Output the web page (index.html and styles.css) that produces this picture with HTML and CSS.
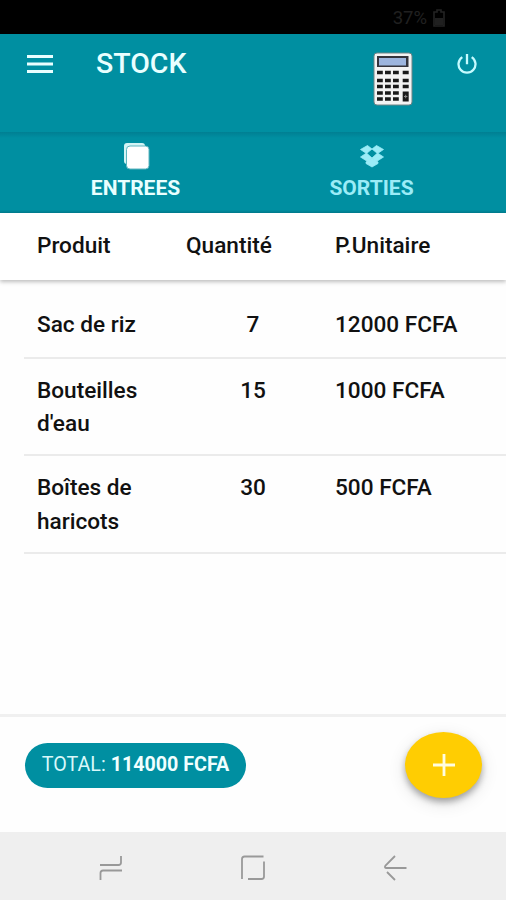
FILE: index.html
```html
<!DOCTYPE html>
<html lang="fr">
<head>
    <meta charset="UTF-8">
    <meta name="viewport" content="width=device-width, initial-scale=1.0">
    <title>Stock</title>
    <link rel="stylesheet" href="styles.css">
</head>
<body>
    <div class="app">
        <div class="status-bar">
            <span>37%</span>
            <svg width="12" height="18" viewBox="0 0 12 18">
                <path d="M4 1h4v2h3v14H1V3h3z" fill="none" stroke="#232323" stroke-width="1.6"/>
                <path d="M2 9h8v7H2z" fill="#202020"/>
            </svg>
        </div>

        <header class="toolbar">
            <svg class="menu-icon" width="26" height="18" viewBox="0 0 26 18">
                <path d="M0 1.5h26M0 9h26M0 16.5h26" stroke="#e9ffff" stroke-width="3"/>
            </svg>
            <h1>STOCK</h1>
            <svg class="calc-icon" width="40" height="54" viewBox="0 0 40 54">
                <rect x="1" y="1" width="38" height="52" rx="3" fill="#f3f3f3" stroke="#6f8385" stroke-width="1"/>
                <rect x="4" y="4" width="31.5" height="11" fill="#34343c"/>
                <rect x="6" y="6" width="27" height="7.5" fill="#9db5de"/>
                <path d="M4 20.5h22M4 28.5h22M4 34.5h22M4 41h22M4 47h22" stroke="#1a1a1a" stroke-width="3.6" stroke-dasharray="5.8 2.2"/>
                <path d="M29.7 18.7h6v3.6h-6zM29.7 26.700h6v3.6h-6zM29.7 32.7h6v3.6h-6zM29.7 39.5h6v10h-6z" fill="#1a1a1a"/>
                <path d="M31 44.5h3.4M32.7 42.8v3.4" stroke="#8a8a8a" stroke-width="1"/>
            </svg>
            <svg class="power-icon" width="20" height="20" viewBox="0 0 20 20">
                <path d="M5.3 3.1a8.5 8.5 0 1 0 9.4 0M10 0v10.2" fill="none" stroke="#c5fbff" stroke-width="2.3"/>
            </svg>
        </header>

        <nav class="tabs">
            <div class="tab active">
                <svg width="28" height="28" viewBox="0 0 28 28">
                    <rect x="2" y="1" width="21" height="21" rx="3" fill="#d3f4f5"/>
                    <rect x="4.5" y="4" width="22.5" height="23" rx="3.5" fill="#ffffff" stroke="#5fb5bf" stroke-width="1"/>
                </svg>
                <span>ENTREES</span>
            </div>
            <div class="tab">
                <svg width="24" height="28" viewBox="0 0 24 28">
                    <path d="M7.5 3.5L12 7 6.5 11.5.5 7.5zM16.5 3.5L12 7l5.500 4.500 6-4zM6.5 11L12 16l-4.500 3.500-7-4.500zM17.5 11L12 16l4.500 3.500 7-4.500zM12 16.500L18 20v1.500l-6 3.500-6-3.500V20z" fill="#9becf7" stroke="#9becf7" stroke-width="0.8"/>
                </svg>
                <span>SORTIES</span>
            </div>
        </nav>

        <div class="list-header">
            <span>Produit</span>
            <span>Quantité</span>
            <span>P.Unitaire</span>
        </div>

        <main class="list">
            <div class="row">
                <span>Sac de riz</span>
                <span class="qty">7</span>
                <span>12000 FCFA</span>
            </div>
            <div class="row">
                <span>Bouteilles d'eau</span>
                <span class="qty">15</span>
                <span>1000 FCFA</span>
            </div>
            <div class="row">
                <span>Boîtes de haricots</span>
                <span class="qty">30</span>
                <span>500 FCFA</span>
            </div>
        </main>

        <footer class="footer">
            <div class="total">TOTAL: <b>114000 FCFA</b></div>
            <div class="fab">
                <svg width="22" height="22" viewBox="0 0 22 22">
                    <path d="M0 11h22M11 0v22" stroke="#fffde0" stroke-width="2.8"/>
                </svg>
            </div>
        </footer>

        <div class="nav-bar">
            <svg width="24" height="26" viewBox="0 0 24 26">
                <path d="M1 10h18.5q2.5 0 2.5-2.5V1M23 15.5H4q-2.5 0-2.5 2.5V25" fill="none" stroke="#999" stroke-width="1.8"/>
            </svg>
            <svg width="24" height="26" viewBox="0 0 24 26">
                <path d="M1 24V4q0-2.5 2.5-2.5H22.5M23 6.5V21.5q0 2.5-2.5 2.5H7" fill="none" stroke="#999" stroke-width="1.8"/>
            </svg>
            <svg width="24" height="26" viewBox="0 0 24 26">
                <path d="M12 1L2.5 10.5Q1 13 3.5 13H23.5M4 17L12 25" fill="none" stroke="#999" stroke-width="1.8"/>
            </svg>
        </div>
    </div>
</body>
</html>
```
FILE: styles.css
```css
body {
    margin: 0;
    font-family: Roboto, sans-serif;
    background-color: #fefefe;
    color: #111;
}
.app {
    display: flex;
    flex-direction: column;
    width: 506px;
    height: 900px;
    overflow: hidden;
}
svg {
    display: block;
    flex: none;
}
.status-bar {
    display: flex;
    align-items: center;
    justify-content: flex-end;
    gap: 6px;
    height: 34px;
    box-sizing: border-box;
    padding: 1px 61px 0 0;
    background-color: #000;
    color: #202020;
    font-size: 18.5px;
}
.toolbar {
    display: flex;
    align-items: flex-start;
    height: 98px;
    background-color: #008fa1;
}
.menu-icon {
    margin: 21px 0 0 27px;
}
.toolbar h1 {
    flex: 1;
    margin: 13px 0 0 43px;
    color: #e9ffff;
    font-size: 28.5px;
    font-weight: 500;
    line-height: 33px;
}
.calc-icon {
    margin-top: 18px;
}
.power-icon {
    margin: 20px 29px 0 44px;
}
.tabs {
    display: grid;
    grid-template-columns: 271px 201px;
    height: 81px;
    box-sizing: border-box;
    padding-top: 10px;
    background: linear-gradient(#007f92 0, #00879a 3px, #008fa1 6px, #008fa1 78px, #007d8f 81px);
}
.tab {
    display: flex;
    flex-direction: column;
    align-items: center;
    color: #9becf7;
    font-size: 21px;
    font-weight: 700;
    line-height: 36px;
}
.tab.active {
    color: #e9ffff;
}
.list-header,
.row {
    display: grid;
    grid-template-columns: 134px 134px 1fr;
    column-gap: 15px;
    font-size: 22.6px;
    font-weight: 500;
    line-height: 33.5px;
}
.list-header {
    height: 67px;
    box-sizing: border-box;
    padding: 16px 0 0 37px;
    background-color: #fff;
    box-shadow: 0 2px 4px rgba(0, 0, 0, 0.25);
}
.list {
    flex: 1;
    padding: 28px 0 0 24px;
}
.row {
    padding: 15px 0 13.5px 13px;
    border-bottom: 2px solid #ebebeb;
}
.row:first-child {
    padding: 0 0 15px 13px;
}
.qty {
    text-align: center;
}
.footer {
    display: flex;
    align-items: flex-start;
    justify-content: space-between;
    height: 118px;
    box-sizing: border-box;
    padding: 15px 24px 0 25px;
    border-top: 3px solid #f0f0f0;
}
.total {
    width: 221px;
    height: 45px;
    margin-top: 11px;
    border-radius: 23px;
    background-color: #008fa1;
    color: #d8f8fa;
    font-size: 19.7px;
    line-height: 43px;
    text-align: center;
    white-space: nowrap;
}
.total b {
    color: #f0ffff;
}
.fab {
    display: flex;
    align-items: center;
    justify-content: center;
    width: 77px;
    height: 66px;
    border-radius: 50%;
    background-color: #ffcd02;
    box-shadow: 0 4px 6px rgba(0, 0, 0, 0.3), 0 5px 18px rgba(0, 0, 0, 0.12);
}
.nav-bar {
    display: flex;
    justify-content: center;
    gap: 118px;
    height: 68px;
    box-sizing: border-box;
    padding-top: 23px;
    background-color: #efefef;
}
```
